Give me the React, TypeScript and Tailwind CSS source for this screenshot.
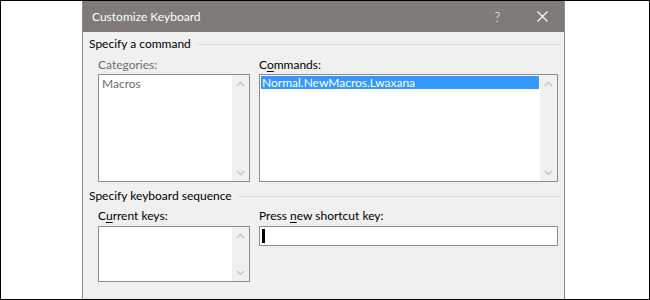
import type { ReactNode } from 'react'

const font = { fontFamily: 'Lato, "Noto Sans", "Liberation Sans", sans-serif' }

function Chevron({ up }: { up?: boolean }) {
  return (
    <svg width="9" height="6" viewBox="0 0 9 6" fill="none">
      <path
        d={up ? 'M1 5L4.5 1.5L8 5' : 'M1 1L4.5 4.5L8 1'}
        stroke="#c4c4c4"
        strokeWidth="1.4"
      />
    </svg>
  )
}

function ScrollBar() {
  return (
    <div className="w-[17px] shrink-0 bg-[#f0f0f0] flex flex-col justify-between">
      <div className="h-[17px] flex items-center justify-center">
        <Chevron up />
      </div>
      <div className="h-[17px] flex items-center justify-center">
        <Chevron />
      </div>
    </div>
  )
}

function SectionHeader({ children }: { children: ReactNode }) {
  return (
    <div className="flex h-4 leading-4 text-black">
      <span className="whitespace-nowrap">{children}</span>
      <div className="ml-[6px] mt-[8px] h-px flex-1 bg-[#dcdcdc]" />
    </div>
  )
}

export default function App() {
  return (
    <div className="w-[650px] h-[300px] border border-black bg-white flex text-[12px]" style={font}>
      <div className="ml-[81px] w-[483px] flex flex-col border-x border-[#8a8a8a]">
        {/* Title bar */}
        <div className="h-[31px] shrink-0 bg-[#807b76] flex items-center pl-[9px] pr-[16px] text-white leading-4">
          <span>Customize Keyboard</span>
          <span className="ml-auto text-[13px] font-light">?</span>
          <svg className="ml-[37px]" width="11" height="11" viewBox="0 0 11 11" fill="none">
            <path d="M0.5 0.5L10.5 10.5M10.5 0.5L0.5 10.5" stroke="#ffffff" strokeWidth="1.1" />
          </svg>
        </div>

        {/* Body */}
        <div className="flex-1 bg-[#f0f0f0] pl-[6px] pr-[5px] pt-[4px]">
          <SectionHeader>Specify a command</SectionHeader>

          <div className="ml-[9px] mr-px mt-[5px] flex gap-[9px]">
            <div className="w-[152px]">
              <div className="h-4 leading-4 text-[#6d6d6d]">Categories:</div>
              <div className="mt-[1px] h-[108px] border border-[#8c8c8c] bg-white flex">
                <div className="flex-1 px-[3px] pt-px leading-[15px] text-[#6d6d6d]">Macros</div>
                <ScrollBar />
              </div>
            </div>
            <div className="w-[299px]">
              <div className="h-4 leading-4 text-black">
                C<span className="underline underline-offset-2">o</span>mmands:
              </div>
              <div className="mt-[1px] h-[108px] border border-[#8c8c8c] bg-white flex">
                <div className="flex-1 p-px">
                  <div className="h-[13px] bg-[#3399ff] text-white leading-[13px] pl-px">Normal.NewMacros.Lwaxana</div>
                </div>
                <ScrollBar />
              </div>
            </div>
          </div>

          <div className="mt-[6px]">
            <SectionHeader>Specify keyboard sequence</SectionHeader>
          </div>

          <div className="ml-[9px] mr-px mt-[4px] flex gap-[9px]">
            <div className="w-[152px]">
              <div className="h-4 leading-4 text-black">
                C<span className="underline underline-offset-2">u</span>rrent keys:
              </div>
              <div className="mt-[2px] h-[56px] border border-[#8c8c8c] bg-white flex">
                <div className="flex-1" />
                <ScrollBar />
              </div>
            </div>
            <div className="w-[299px]">
              <div className="h-4 leading-4 text-black">
                Press <span className="underline underline-offset-2">n</span>ew shortcut key:
              </div>
              <div className="mt-[2px] h-[20px] border border-[#8c8c8c] bg-white pl-[2px] pt-[2px]">
                <div className="w-[3px] h-[14px] bg-black" />
              </div>
            </div>
          </div>
        </div>
      </div>
    </div>
  )
}
